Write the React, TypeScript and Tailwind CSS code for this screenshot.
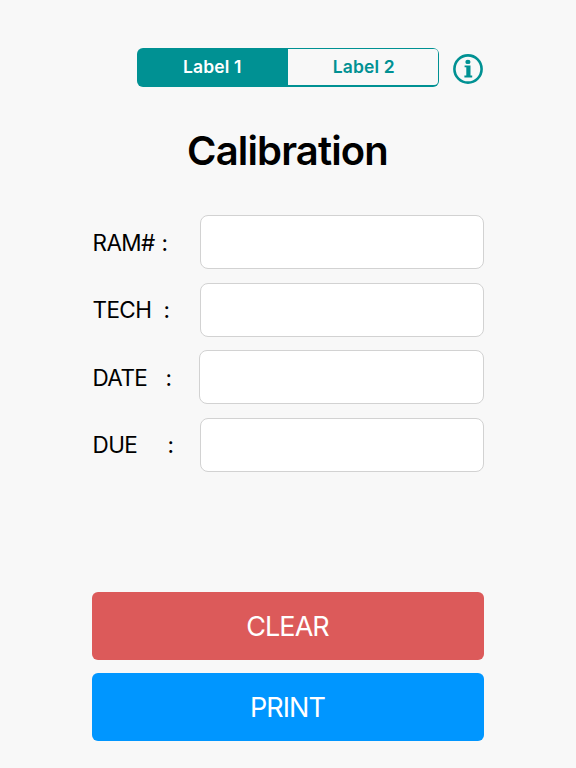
const fields = [
  { label: "RAM#", labelWidth: "w-[75.5px]", inputWidth: "w-[284px]" },
  { label: "TECH", labelWidth: "w-[77.5px]", inputWidth: "w-[284px]" },
  { label: "DATE", labelWidth: "w-[79.5px]", inputWidth: "w-[285px]" },
  { label: "DUE", labelWidth: "w-[81.5px]", inputWidth: "w-[284px]" },
];

function InfoIcon() {
  return (
    <svg viewBox="0 0 30 30" className="size-[30px]" fill="none">
      <circle cx="15" cy="15" r="13.6" stroke="#009193" strokeWidth="2.6" />
      <ellipse cx="14.9" cy="7.9" rx="2.6" ry="2.2" fill="#009193" />
      <path d="M11.6 11.4h5.9v10.2h1.7v1.9h-7.8v-1.9h1.9v-8.3h-1.7z" fill="#009193" />
    </svg>
  );
}

export default function App() {
  return (
    <main className="flex h-[768px] w-[576px] flex-col bg-[#f8f8f8] px-[92px] pt-[47px] font-['Inter',sans-serif] text-black">
      <div className="flex h-10 pl-[45px]">
        <div className="mt-[0.5px] flex h-[39px] w-[302px] rounded-[6px] bg-[#009193] p-[1.5px] text-[17.5px] font-semibold tracking-[0.1px]">
          <button className="w-[149.5px] pt-px pr-[2px] text-white">Label 1</button>
          <button className="flex-1 rounded-r-[4px] bg-[#f8f8f8] pt-px pl-[2px] text-[#009193]">Label 2</button>
        </div>
        <button aria-label="Info" className="mt-[7px] ml-[14px] size-[30px]">
          <InfoIcon />
        </button>
      </div>

      <h1 className="mt-10 pr-px text-center text-[40px] leading-[48px] font-semibold tracking-[-0.85px]">Calibration</h1>

      <div className="mt-10 flex flex-col gap-[13.5px]">
        {fields.map((f) => (
          <div key={f.label} className="flex h-[54px] items-center justify-between">
            <label className={`flex justify-between pt-px pl-[0.5px] text-[22.5px] tracking-[-0.6px] ${f.labelWidth}`}>
              <span>{f.label}</span>
              <span>:</span>
            </label>
            <input className={`h-full rounded-lg border border-[#d2d2d2] bg-white px-3 ${f.inputWidth}`} />
          </div>
        ))}
      </div>

      <div className="mt-auto mb-[27.5px] flex flex-col gap-[13.5px] text-[27px] tracking-[-0.9px] text-white">
        <button className="h-[67.5px] rounded-md bg-[#dc5a5a] pt-0.5 pr-px">CLEAR</button>
        <button className="h-[67.5px] rounded-md bg-[#0096ff] pt-0.5 pr-px">PRINT</button>
      </div>
    </main>
  );
}
